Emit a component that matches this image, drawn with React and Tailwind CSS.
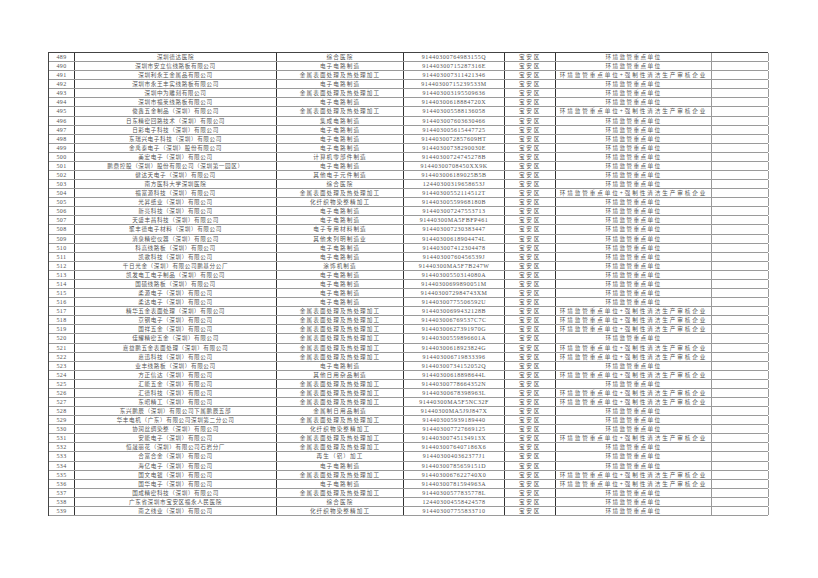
import React from "react";

// industry names used many times
const J = "金属表面处理及热处理加工";
const D = "电子电路制造";
const H = "综合医院";
const R = "化纤织物染整精加工";

const A = "环境监管重点单位";
const B = "环境监管重点单位+强制性清洁生产审核企业";

const rows = [
  [489, "深圳德达医院", H, "91440300764983155Q", A],
  [490, "深圳市安立信线路板有限公司", D, "91440300715287316E", A],
  [491, "深圳利永王金属品有限公司", J, "914403007311421346", B],
  [492, "深圳市永王丰实线路板有限公司", D, "91440300715239533M", A],
  [493, "深圳中为雕刻有限公司", J, "914403003195509636", A],
  [494, "深圳市福莱线路板有限公司", D, "91440300618884720X", A],
  [495, "俊鑫五金制品（深圳）有限公司", J, "914403005588136058", B],
  [496, "日东精密回路技术（深圳）有限公司", "集成电路制造", "914403007603630466", A],
  [497, "日彩电子科技（深圳）有限公司", D, "914403005615447725", A],
  [498, "东瑞兴电子科技（深圳）有限公司", D, "9144030072857609HT", A],
  [499, "金禹泰电子（深圳）股份有限公司", D, "91440300738290030E", A],
  [500, "美宏电子（深圳）有限公司", "计算机零部件制造", "91440300724745278B", A],
  [501, "鹏鼎控股（深圳）股份有限公司（深圳第一园区）", D, "91440300708450XX9K", A],
  [502, "健达天电子（深圳）有限公司", "其他电子元件制造", "914403006189025B5B", A],
  [503, "南方医科大学深圳医院", H, "12440300319658653J", A],
  [504, "福富源科技（深圳）有限公司", J, "91440300552114512T", B],
  [505, "光昇纸业（深圳）有限公司", R, "91440300559968180B", A],
  [506, "新亮科技（深圳）有限公司", D, "914403007247553713", A],
  [507, "天盛丰昌科技（深圳）有限公司", D, "91440300MA5FBFP461", A],
  [508, "聚丰德电子材料（深圳）有限公司", "电子专用材料制造", "914403007230383447", A],
  [509, "清泉精密仪器（深圳）有限公司", "其他未列明制造业", "91440300618904474L", A],
  [510, "科高线路板（深圳）有限公司", D, "914403007412304478", A],
  [511, "凯歌科技（深圳）有限公司", D, "91440300760456539J", A],
  [512, "千日光金（深圳）有限公司鹏基分公厂", "涂饰机制造", "91440300MA5F7B247W", A],
  [513, "凯发电工电子制品（深圳）有限公司", D, "91440300550314080A", A],
  [514, "国硕线路板（深圳）有限公司", D, "91440300699890051M", A],
  [515, "柔源电子（深圳）有限公司", D, "9144030072984743XM", A],
  [516, "柔达电子（深圳）有限公司", D, "91440300775506592U", A],
  [517, "精华五金表面处理（深圳）有限公司", J, "91440300699432128B", B],
  [518, "京钢电子（深圳）有限公司", J, "914403006769537C7C", B],
  [519, "国祥五金（深圳）有限公司", J, "91440300627391970G", B],
  [520, "佳耀精密五金（深圳）有限公司", J, "91440300559896601A", A],
  [521, "嘉益鹏五金表面处理（深圳）有限公司", J, "91440300618923824G", B],
  [522, "嘉迅科技（深圳）有限公司", J, "914403006719833396", B],
  [523, "业丰线路板（深圳）有限公司", D, "91440300734152052Q", A],
  [524, "方正信达（深圳）有限公司", "其他日用杂品制造", "91440300618898644L", B],
  [525, "汇能五金（深圳）有限公司", J, "91440300778664352N", A],
  [526, "汇德科技（深圳）有限公司", J, "91440300678398963L", B],
  [527, "东昭精工（深圳）有限公司", J, "91440300MA5F5NC32F", B],
  [528, "东兴鹏辰（深圳）有限公司下属鹏辰五部", "金属制日用品制造", "91440300MA5J9J847X", A],
  [529, "华丰电机（广东）有限公司深圳第二分公司", J, "914403005939189440", A],
  [530, "协润丝绸染整（深圳）有限公司", R, "914403007727669125", A],
  [531, "安能电子（深圳）有限公司", J, "91440300745134913X", B],
  [532, "恒晟丽花（深圳）有限公司石岩分厂", J, "9144030076407186X6", A],
  [533, "合富合金（深圳）有限公司", "再生（铝）加工", "9144030040362377J1", A],
  [534, "海亿电子（深圳）有限公司", D, "91440300785659151D", A],
  [535, "国文电镀（深圳）有限公司", J, "9144030067622740X0", B],
  [536, "国华电子（深圳）有限公司", D, "91440300781594963A", B],
  [537, "国成精密科技（深圳）有限公司", J, "91440300577835778L", A],
  [538, "广东省深圳市宝安区福永人民医院", H, "124403004558424578", A],
  [539, "南之线业（深圳）有限公司", R, "914403007755833710", A],
];

const cjk = { fontFamily: '"Liberation Serif", "Noto Sans CJK SC", serif' };

export default function App() {
  return (
    <div className="w-[818px] h-[578px] bg-white overflow-hidden">
      <div className="pt-[52px] pl-[48px]">
        <div className="w-[720px] border-t border-l border-[#444]" style={cjk}>
          {rows.map(([no, name, ind, code, kind]) => (
            <div
              key={no}
              className="flex h-[9.08px] border-b border-[#9a9a9a] text-[5.6px] leading-[8px] text-[#555]"
            >
              <div className="w-[26px] shrink-0 border-r border-[#333] text-center text-[6px] tracking-[0.4px]">
                {no}
              </div>
              <div className="w-[202px] shrink-0 border-r border-[#333] text-center tracking-[0.6px] whitespace-nowrap overflow-hidden">
                {name}
              </div>
              <div className="w-[127px] shrink-0 border-r border-[#333] text-center tracking-[1.1px] whitespace-nowrap overflow-hidden">
                {ind}
              </div>
              <div className="w-[101px] shrink-0 border-r border-[#333] text-center text-[6px] tracking-[0.5px] whitespace-nowrap overflow-hidden">
                {code}
              </div>
              <div className="w-[51px] shrink-0 border-r border-[#333] text-center tracking-[1.8px]">
                宝安区
              </div>
              <div
                className={
                  kind === B
                    ? "w-[156px] shrink-0 border-r border-[#9a9a9a] text-center tracking-[1.9px] whitespace-nowrap overflow-hidden"
                    : "w-[156px] shrink-0 border-r border-[#9a9a9a] text-center tracking-[1.4px] whitespace-nowrap overflow-hidden"
                }
              >
                {kind}
              </div>
              <div className="w-[57px] shrink-0 border-r border-[#9a9a9a]"></div>
            </div>
          ))}
        </div>
      </div>
    </div>
  );
}
